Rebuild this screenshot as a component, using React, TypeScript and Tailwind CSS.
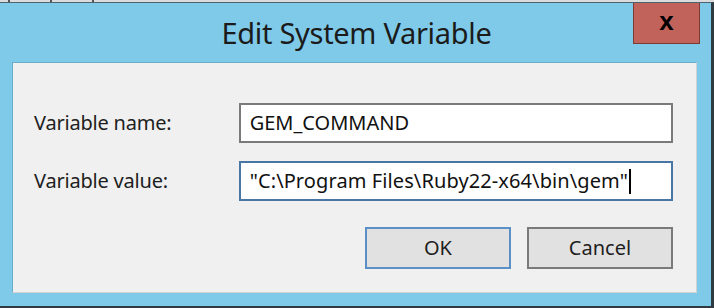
export default function App() {
  const font = { fontFamily: '"Noto Sans", "Open Sans", sans-serif' };
  return (
    <div className="w-[714px] h-[308px] flex flex-col bg-[#e6e6e6] overflow-hidden" style={font}>
      {/* background window peeking above */}
      <div className="h-[2px] shrink-0 bg-[#dcdcdc] flex gap-[40px] px-[8px]">
        <div className="w-[2px] bg-[#555]" />
        <div className="w-[2px] bg-[#555]" />
        <div className="w-[2px] bg-[#555]" />
      </div>
      <div className="relative flex-1 flex flex-col bg-[#7fcae8] border-t border-t-[#4a6470] border-r-[3px] border-b-[2px] border-[#2e3c42]">
        {/* title bar */}
        <div className="h-[59px] shrink-0 flex items-center justify-center text-[29px] text-[#1b1b1b] pl-[2px] tracking-[-0.3px]">
          Edit System Variable
        </div>
        <button className="absolute top-0 right-[11px] w-[67px] h-[41px] bg-[#c1635b] border border-t-0 border-[#7e3a34] flex items-center justify-center">
          <span className="text-[26px] font-bold leading-none text-black mb-[4px]" style={{ fontFamily: '"Liberation Sans", Arial, sans-serif' }}>x</span>
        </button>

        {/* client area */}
        <div className="ml-[12px] mr-[14px] h-[231px] bg-[#f0f0f0] border-l border-t border-[#6aaecb] border-r border-b border-r-[#d2d2d2] border-b-[#d2d2d2] flex flex-col pt-[40px] pl-[21px] pr-[23px]">
          <div className="flex items-center h-[40px]">
            <span className="w-[205px] text-[20px] text-[#1e1e1e] tracking-[-0.2px]">Variable name:</span>
            <div className="w-[435px] h-[40px] bg-white border-2 border-[#7a7a7a] flex items-center pl-[9px] text-[20px] text-[#111]">
              GEM_COMMAND
            </div>
          </div>
          <div className="flex items-center h-[40px] mt-[18px]">
            <span className="w-[205px] text-[20px] text-[#1e1e1e] tracking-[-0.2px]">Variable value:</span>
            <div className="w-[435px] h-[40px] bg-white border-2 border-[#4a76a6] flex items-center pl-[9px] text-[20px] text-[#111] tracking-[0.1px]">
              "C:\Program Files\Ruby22-x64\bin\gem"
              <span className="ml-[1px] w-[2px] h-[25px] bg-black" />
            </div>
          </div>
          <div className="flex justify-end gap-[16px] mt-[26px]">
            <button className="w-[146px] h-[42px] bg-[#e1e1e1] border-2 border-[#5a8fc8] text-[20px] text-[#1e1e1e]">OK</button>
            <button className="w-[146px] h-[42px] bg-[#e1e1e1] border-2 border-[#7a7a7a] text-[20px] text-[#1e1e1e]">Cancel</button>
          </div>
        </div>
      </div>
    </div>
  );
}
